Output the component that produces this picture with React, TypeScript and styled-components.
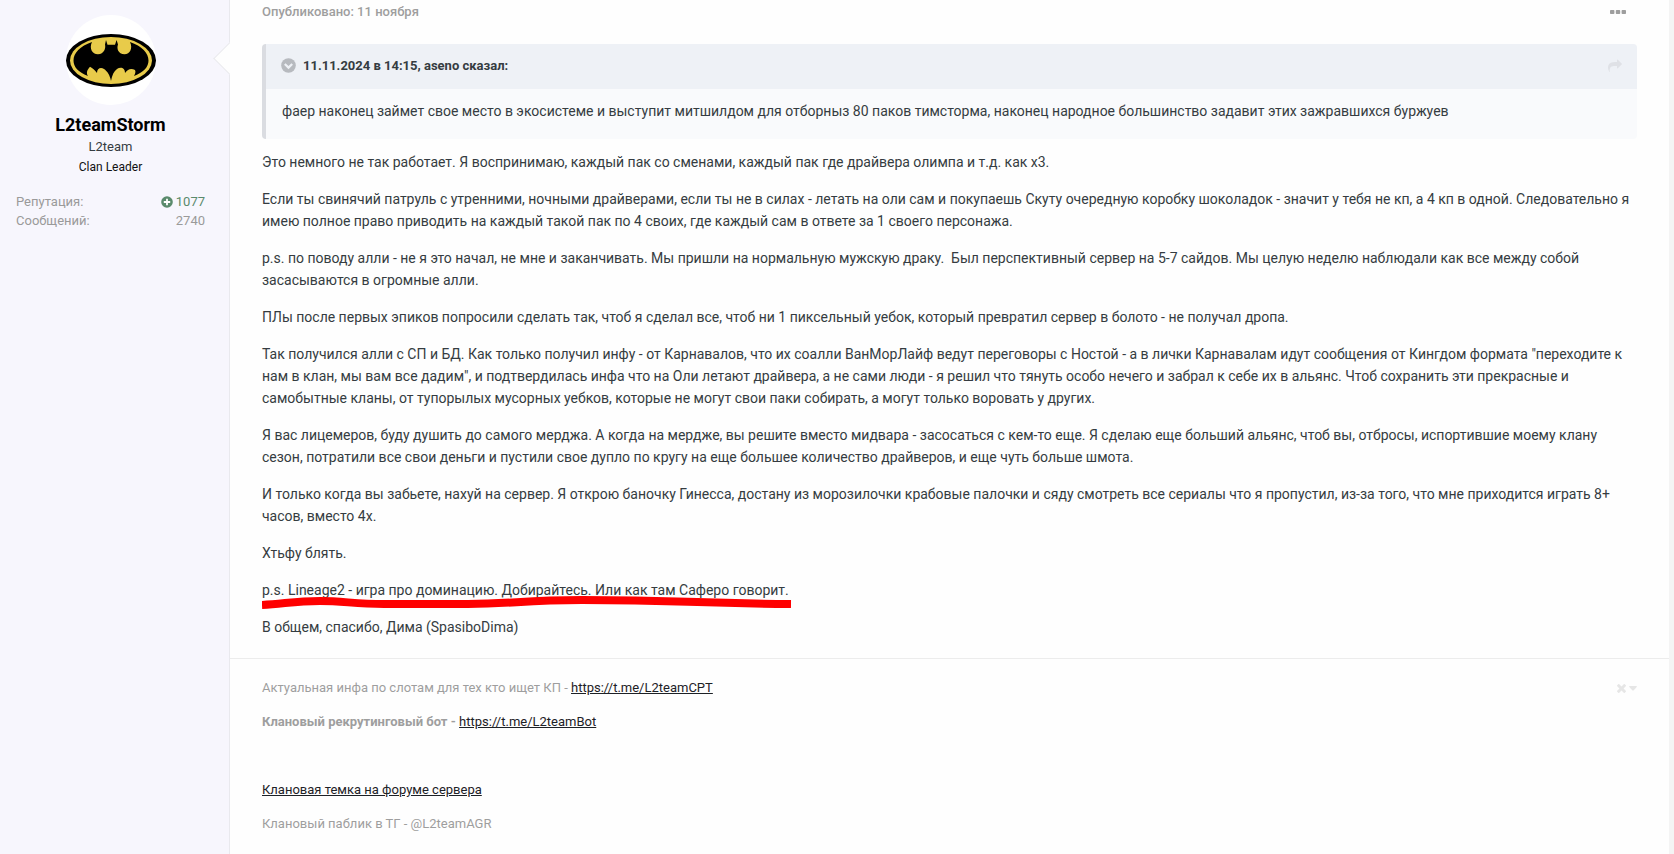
import React from "react";
import styled, { createGlobalStyle } from "styled-components";

const GlobalStyle = createGlobalStyle`
  *, *::before, *::after { box-sizing: border-box; }
  body {
    margin: 0;
    background: #f4f4f4;
    color: #353c41;
    font-family: Roboto, "Noto Sans", sans-serif;
    font-size: 14px;
    line-height: 22px;
  }
  p, h1, h2, h3, ul, dl, dd, blockquote { margin: 0; padding: 0; }
`;

const Post = styled.article`
  display: flex;
  min-height: 100vh;
  margin-right: 5px;
  background: #fefefe;
`;

const Author = styled.aside`
  position: relative;
  flex: none;
  width: 230px;
  padding: 15px 24px 0 16px;
  border-right: 1px solid #e9e9ee;
  background: #f7f6fd;
  text-align: center;
`;

const Pointer = styled.span`
  position: absolute;
  top: 47px;
  right: -12px;
  width: 23px;
  height: 23px;
  border: solid #e9e9ee;
  border-width: 0 0 1px 1px;
  background: #fefefe;
  transform: rotate(45deg);
`;

const AvatarLink = styled.a`
  display: block;
  width: 90px;
  height: 90px;
  margin: 0 auto;
  border-radius: 50%;
  background: #fff;
  svg { display: block; }
`;

const AuthorName = styled.h3`
  margin-top: 8px;
  font-size: 18px;
  font-weight: 700;
  line-height: 24px;
  a { color: #000; text-decoration: none; }
`;

const AuthorTitle = styled.p`
  font-size: 13px;
  line-height: 20px;
`;

const AuthorGroup = styled.p`
  font-size: 12px;
  line-height: 20px;
  color: #111;
`;

const Stats = styled.dl`
  margin-top: 15px;
  font-size: 13px;
  line-height: 19px;
  color: #9a9a9a;
`;

const Stat = styled.div`
  display: flex;
  justify-content: space-between;
`;

const StatValue = styled.dd<{ $positive?: boolean }>`
  display: flex;
  align-items: center;
  gap: 3px;
  color: ${(p) => (p.$positive ? "#5a8a6c" : "inherit")};
`;

const Main = styled.div`
  flex: 1;
  min-width: 0;
`;

const Content = styled.div`
  padding: 0 32px 20px;
`;

const Meta = styled.header`
  display: flex;
  align-items: center;
  justify-content: space-between;
  height: 24px;
  margin-bottom: 20px;
  padding-right: 11px;
  font-size: 13px;
  font-weight: 500;
  color: #9e9e9e;
`;

const IconButton = styled.button`
  display: flex;
  align-items: center;
  gap: 3px;
  padding: 0;
  border: 0;
  background: none;
  color: ${(p) => p.color};
  cursor: pointer;
`;

const Quote = styled.blockquote`
  overflow: hidden;
  margin-bottom: 12px;
  border-left: 4px solid #dadce1;
  border-radius: 4px;
  background: #f9fafc;
`;

const QuoteHead = styled.div`
  display: flex;
  align-items: center;
  gap: 7px;
  height: 45px;
  padding: 0 15px 2px;
  background: #eef1f6;
  font-size: 13px;
  font-weight: 700;
  a { margin-left: auto; color: #dfe1e6; }
  svg { display: block; }
`;

const QuoteBody = styled.p`
  padding: 11px 16px 17px;
`;

const Text = styled.div`
  display: grid;
  gap: 15px;
`;

const Marked = styled.p`
  position: relative;
`;

const Marker = styled.svg`
  position: absolute;
  top: 12px;
  left: 0;
`;

const Signature = styled.footer`
  display: flex;
  align-items: flex-start;
  justify-content: space-between;
  padding: 18px 32px 12px;
  border-top: 1px solid #ececec;
  font-size: 13px;
  line-height: 21px;
  color: #9e9e9e;
  button { margin-top: 7px; }
`;

const SignatureLines = styled.div`
  display: grid;
  grid-auto-rows: 21px;
  gap: 13px;
  a { color: #1d2126; font-weight: 400; }
`;

const BatLogo = () => (
  <svg width="90" height="90" viewBox="0 0 90 90" role="img" aria-label="L2teamStorm">
    <ellipse cx="45" cy="45.500" rx="45" ry="26.500" fill="#000" />
    <ellipse cx="45" cy="45.500" rx="41" ry="23.500" fill="#e8cb4a" />
    <path
      d="M26 27C14 31 7.500 38 7.500 45.500C7.500 52 12 57 22 61C20 58 21 55 24 51.700C26 53 28.500 54.500 31 58C31 53 35 52 38 54C41 56 44 60 45 66C46 60 48 56 51 54C54 52 59 52 59 58C62 54 65 53 69 55C70 57 69 59 68 61C78 57 82.500 52 82.500 45.500C82.500 38 76 31 64 27C67 33 64 39.300 58.500 39.300C52 39.300 50.500 33 52 29.500L50.600 25L49 29.700H41.500L40 25L39 29.500C40 33 38 39.300 32 39.300C26 39.300 23 33 26 27Z"
      fill="#000"
    />
  </svg>
);

const PlusCircle = () => (
  <svg width="12" height="12" viewBox="0 0 12 12" aria-hidden="true">
    <circle cx="6" cy="6" r="5.800" fill="currentColor" />
    <path d="M6 2.800V9.200M2.800 6H9.200" stroke="#fff" strokeWidth="1.800" />
  </svg>
);

const ChevronCircle = () => (
  <svg width="15" height="15" viewBox="0 0 15 15" aria-hidden="true">
    <circle cx="7.500" cy="7.500" r="7.300" fill="currentColor" />
    <path d="M3.800 6L7.500 9.600L11.200 6" stroke="#eef1f6" strokeWidth="2.200" fill="none" />
  </svg>
);

const Dots = () => (
  <svg width="16" height="4" viewBox="0 0 16 4" fill="currentColor" aria-hidden="true">
    <rect width="4.400" height="4" rx="0.800" />
    <rect x="5.800" width="4.400" height="4" rx="0.800" />
    <rect x="11.600" width="4.400" height="4" rx="0.800" />
  </svg>
);

const ShareArrow = () => (
  <svg width="14" height="14" viewBox="0 0 1792 1792" fill="currentColor" aria-hidden="true">
    <path d="M1792 640q0 26-19 45l-512 512q-19 19-45 19t-45-19-19-45v-256h-224q-98 0-175.500 6t-154 21.500-133 42.500-105.500 69.500-80 101-48.500 138.500-17.500 181q0 55 5 123 0 6 2.500 23.500t2.500 26.500q0 15-8.500 25t-23.500 10q-16 0-28-17-7-9-13-22t-13.500-30-10.500-24q-127-285-127-451 0-199 53-333 162-403 875-403h224v-256q0-26 19-45t45-19 45 19l512 512q19 19 19 45z" />
  </svg>
);

const Cross = () => (
  <svg width="9" height="9" viewBox="302 366 1188 1188" fill="currentColor" aria-hidden="true">
    <path d="M1490 1322q0 40-28 68l-136 136q-28 28-68 28t-68-28l-294-294-294 294q-28 28-68 28t-68-28l-136-136q-28-28-28-68t28-68l294-294-294-294q-28-28-28-68t28-68l136-136q28-28 68-28t68 28l294 294 294-294q28-28 68-28t68 28l136 136q28 28 28 68t-28 68l-294 294 294 294q28 28 28 68z" />
  </svg>
);

const CaretDown = () => (
  <svg width="8" height="5" viewBox="0 0 8 5" fill="currentColor" aria-hidden="true">
    <path d="M0.600 0H7.400Q8.200 0.300 7.700 1L4.500 4.400Q4 4.800 3.500 4.400L0.300 1Q-0.200 0.300 0.600 0Z" />
  </svg>
);

export default function App() {
  return (
    <>
      <GlobalStyle />
      <Post>
        <Author>
          <Pointer />
          <AvatarLink href="#profile">
            <BatLogo />
          </AvatarLink>
          <AuthorName>
            <a href="#profile">L2teamStorm</a>
          </AuthorName>
          <AuthorTitle>L2team</AuthorTitle>
          <AuthorGroup>Clan Leader</AuthorGroup>
          <Stats>
            <Stat>
              <dt>Репутация:</dt>
              <StatValue $positive>
                <PlusCircle />
                1077
              </StatValue>
            </Stat>
            <Stat>
              <dt>Сообщений:</dt>
              <StatValue>2740</StatValue>
            </Stat>
          </Stats>
        </Author>
        <Main>
          <Content>
            <Meta>
              <time dateTime="2024-11-11">Опубликовано: 11 ноября</time>
              <IconButton type="button" color="#9e9e9e" aria-label="Действия">
                <Dots />
              </IconButton>
            </Meta>
            <Quote>
              <QuoteHead>
                <IconButton type="button" color="#b7babf" aria-label="Свернуть цитату">
                  <ChevronCircle />
                </IconButton>
                <span>11.11.2024 в 14:15, aseno сказал:</span>
                <a href="#quoted" aria-label="Перейти к сообщению">
                  <ShareArrow />
                </a>
              </QuoteHead>
              <QuoteBody>
                фаер наконец займет свое место в экосистеме и выступит митшилдом для отборныз 80 паков тимсторма, наконец
                народное большинство задавит этих зажравшихся буржуев
              </QuoteBody>
            </Quote>
            <Text>
              <p>Это немного не так работает. Я воспринимаю, каждый пак со сменами, каждый пак где драйвера олимпа и т.д. как х3.</p>
              <p>
                Если ты свинячий патруль с утренними, ночными драйверами, если ты не в силах - летать на оли сам и
                покупаешь Скуту очередную коробку шоколадок - значит у тебя не кп, а 4 кп в одной. Следовательно я имею
                полное право приводить на каждый такой пак по 4 своих, где каждый сам в ответе за 1 своего персонажа.
              </p>
              <p>
                p.s. по поводу алли - не я это начал, не мне и заканчивать. Мы пришли на нормальную мужскую
                драку.&nbsp; Был перспективный сервер на 5-7 сайдов. Мы целую неделю наблюдали как все между собой
                засасываются в огромные алли.
              </p>
              <p>
                ПЛы после первых эпиков попросили сделать так, чтоб я сделал все, чтоб ни 1 пиксельный уебок, который
                превратил сервер в болото - не получал дропа.
              </p>
              <p>
                Так получился алли с СП и БД. Как только получил инфу - от Карнавалов, что их соалли ВанМорЛайф ведут
                переговоры с Ностой - а в лички Карнавалам идут сообщения от Кингдом формата "переходите к нам в клан,
                мы вам все дадим", и подтвердилась инфа что на Оли летают драйвера, а не сами люди - я решил что тянуть
                особо нечего и забрал к себе их в альянс. Чтоб сохранить эти прекрасные и самобытные кланы, от
                тупорылых мусорных уебков, которые не могут свои паки собирать, а могут только воровать у других.
              </p>
              <p>
                Я вас лицемеров, буду душить до самого мерджа. А когда на мердже, вы решите вместо мидвара - засосаться
                с кем-то еще. Я сделаю еще больший альянс, чтоб вы, отбросы, испортившие моему клану сезон, потратили
                все свои деньги и пустили свое дупло по кругу на еще большее количество драйверов, и еще чуть больше
                шмота.
              </p>
              <p>
                И только когда вы забьете, нахуй на сервер. Я открою баночку Гинесса, достану из морозилочки крабовые
                палочки и сяду смотреть все сериалы что я пропустил, из-за того, что мне приходится играть 8+ часов,
                вместо 4х.
              </p>
              <p>Хтьфу блять.</p>
              <Marked>
                p.s. Lineage2 - игра про доминацию. Добирайтесь. Или как там Саферо говорит.
                <Marker width="530" height="24" viewBox="0 0 530 24" aria-hidden="true">
                  <path
                    d="M0 14C22 13 32 10 58 10C82 10 92 13 122 13H206C250 13 262 9 320 9C420 9 420 12 529 13"
                    stroke="#fe0000"
                    strokeWidth="8"
                    fill="none"
                  />
                </Marker>
              </Marked>
              <p>В общем, спасибо, Дима (SpasiboDima)</p>
            </Text>
          </Content>
          <Signature>
            <SignatureLines>
              <p>
                Актуальная инфа по слотам для тех кто ищет КП - <a href="https://t.me/L2teamCPT">https://t.me/L2teamCPT</a>
              </p>
              <p>
                <strong>
                  Клановый рекрутинговый бот - <a href="https://t.me/L2teamBot">https://t.me/L2teamBot</a>
                </strong>
              </p>
              <p>&nbsp;</p>
              <p>
                <a href="#clan-topic">Клановая темка на форуме сервера</a>
              </p>
              <p>Клановый паблик в ТГ - @L2teamAGR</p>
            </SignatureLines>
            <IconButton type="button" color="#e6e6e6" aria-label="Скрыть подпись">
              <Cross />
              <CaretDown />
            </IconButton>
          </Signature>
        </Main>
      </Post>
    </>
  );
}
